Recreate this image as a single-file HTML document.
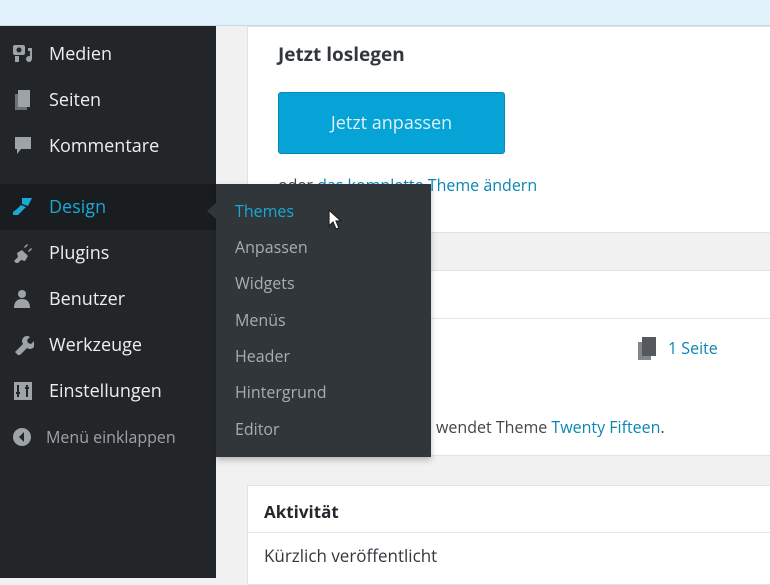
<!DOCTYPE html>
<html><head><style>
*{margin:0;padding:0;box-sizing:border-box}
body{width:770px;height:578px;overflow:hidden;background:#f1f1f1;font-family:"Open Sans","Liberation Sans",sans-serif;position:relative}
.top{position:absolute;left:0;top:0;width:770px;height:26px;background:#e2f2fc;border-bottom:1px solid #c9d9e3}
.side{position:absolute;left:0;top:26px;width:216px;height:552px;background:#232629}
.item{position:absolute;left:0;width:216px;height:40px;color:#eee;font-size:18px;line-height:40px;padding-left:49px}
.ic{position:absolute;left:12px;top:10px;width:22px;height:20px;fill:#9ea3a8}
.card{position:absolute;left:247px;width:523px;background:#fff;border:1px solid #e2e2e2;border-right:none}
.fly{position:absolute;left:216px;top:184px;width:215px;height:273px;background:#31363a;box-shadow:0 3px 6px rgba(0,0,0,.25)}
.fly div{position:absolute;left:19px;font-size:16px;color:#a9adb1}
a{color:#0a86b3;text-decoration:none}
</style></head><body>
<div class="top"></div>
<div class="card" style="top:26px;height:207px">
  <div style="position:absolute;left:30px;top:14px;font-size:19px;font-weight:bold;color:#32373c">Jetzt loslegen</div>
  <div style="position:absolute;left:30px;top:65px;width:227px;height:62px;background:#05a3d6;border:1px solid #0a87b4;border-radius:3px;color:#dff3fb;font-size:18px;text-align:center;line-height:60px">Jetzt anpassen</div>
  <div style="position:absolute;left:30px;top:147px;font-size:16px;color:#444">oder <a>das komplette Theme ändern</a></div>
</div>
<div class="card" style="top:270px;height:186px">
  <div style="position:absolute;left:0;top:47px;width:523px;border-top:1px solid #e5e5e5"></div>
  <svg style="position:absolute;left:390px;top:66px" width="18" height="24" viewBox="0 0 18 24"><rect x="0" y="5" width="13" height="18" fill="#82878c"/><rect x="4" y="0" width="14" height="19" fill="#55595e"/></svg>
  <div style="position:absolute;left:420px;top:66px;font-size:16px;color:#0a86b3">1 Seite</div>
  <div style="position:absolute;left:188px;top:145px;font-size:16px;color:#444">wendet Theme <a>Twenty Fifteen</a>.</div>
</div>
<div class="card" style="top:485px;height:100px">
  <div style="position:absolute;left:16px;top:14px;font-size:17px;font-weight:bold;color:#23282d">Aktivität</div>
  <div style="position:absolute;left:0;top:46px;width:523px;border-top:1px solid #e5e5e5"></div>
  <div style="position:absolute;left:16px;top:58px;font-size:17px;color:#32373c">Kürzlich veröffentlicht</div>
</div>
<div class="side">
  <div class="item" style="top:8px"><svg class="ic" viewBox="0 0 22 20"><rect x="1" y="1" width="12" height="10" rx="2"/><circle cx="7" cy="6" r="2.5" fill="#232629"/><path d="M16 4h4v11a3 3 0 1 1-2-2.8V7h-2z"/><path d="M3 12h4v6H3z"/></svg>Medien</div>
  <div class="item" style="top:54px"><svg class="ic" viewBox="0 0 22 20"><rect x="3" y="4" width="12" height="16" fill="#6d7277"/><rect x="6" y="0" width="12" height="17"/></svg>Seiten</div>
  <div class="item" style="top:100px"><svg class="ic" viewBox="0 0 22 20"><path d="M3 1h16v12H9l-4 5v-5H3z"/></svg>Kommentare</div>
  <div class="item" style="top:158px;height:46px;line-height:46px;background:#191d20;color:#19a9d4"><svg class="ic" style="top:12px;fill:#19a9d4" viewBox="0 0 22 20"><path d="M10 2l10 0-4 8-6-2zM9 9l5 2-4 4-4 4-5 0 0-3 4-3z"/></svg>Design</div>
  <div class="item" style="top:207px"><svg class="ic" viewBox="0 0 22 20"><path d="M2 18l4-4-1-4 5-3 6 6-3 5-4-1-4 4zM12 4l3-3 1 1-3 3zM16 8l3-3 1 1-3 3z"/></svg>Plugins</div>
  <div class="item" style="top:253px"><svg class="ic" viewBox="0 0 22 20"><circle cx="10" cy="5" r="4"/><path d="M2 19c0-7 4-9 8-9s8 2 8 9z"/></svg>Benutzer</div>
  <div class="item" style="top:299px"><svg class="ic" viewBox="0 0 22 20"><path d="M3 17l8-8a5 5 0 0 1 7-7l-3 3 1 3 3 1 3-3a5 5 0 0 1-7 7l-8 8z"/></svg>Werkzeuge</div>
  <div class="item" style="top:345px"><svg class="ic" viewBox="0 0 22 20"><rect x="2" y="1" width="18" height="18"/><path d="M6 4v12M15 4v12M4 12h4M13 7h4" stroke="#232629" stroke-width="2"/></svg>Einstellungen</div>
  <div class="item" style="top:391px;font-size:16px;color:#9ea3a8;padding-left:46px"><svg class="ic" viewBox="0 0 22 20"><circle cx="10" cy="10" r="9"/><path d="M12 5l-5 5 5 5z" fill="#232629"/></svg>Menü einklappen</div>
</div>
<div class="fly">
  <div style="top:16px;color:#19a9d4">Themes</div>
  <div style="top:52px">Anpassen</div>
  <div style="top:88px">Widgets</div>
  <div style="top:125px">Menüs</div>
  <div style="top:161px">Header</div>
  <div style="top:197px">Hintergrund</div>
  <div style="top:234px">Editor</div>
</div>
<div style="position:absolute;left:207px;top:203px;width:0;height:0;border-top:8px solid transparent;border-bottom:8px solid transparent;border-right:9px solid #31363a"></div>
<svg style="position:absolute;left:328px;top:209px" width="14" height="22" viewBox="0 0 14 22"><path d="M1 1v16l4-4 3 7 3-1-3-7h5z" fill="#fff" stroke="#222" stroke-width="1.2"/></svg>
</body></html>
